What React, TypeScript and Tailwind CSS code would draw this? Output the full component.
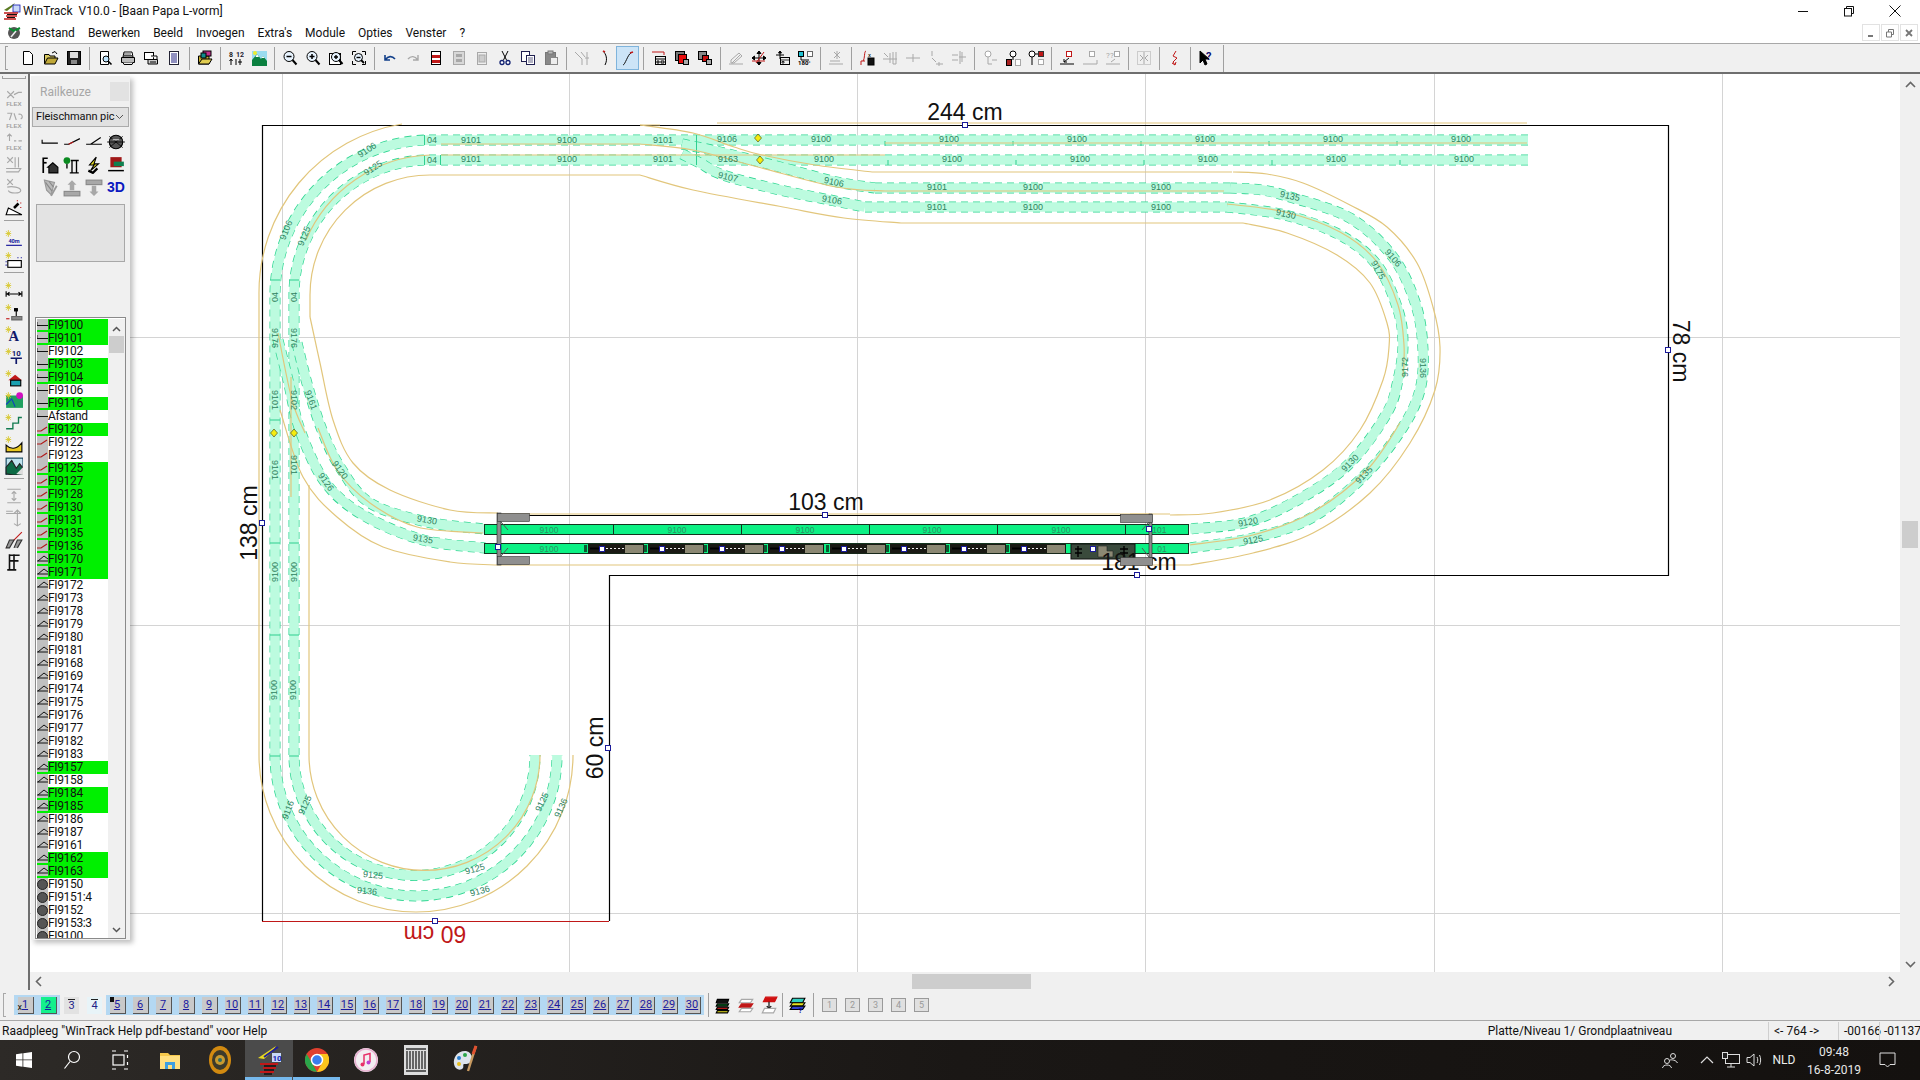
import type { ReactNode } from 'react';

// smooth line through the points, for the curved parts of the track plan
function spline(p: number[][]) {
  let d = `M${p[0][0]} ${p[0][1]}`;
  for (let i = 0; i < p.length - 1; i++) {
    const a = p[i - 1] || p[i];
    const b = p[i];
    const c = p[i + 1];
    const e = p[i + 2] || c;
    d += `C${b[0] + (c[0] - a[0]) / 6} ${b[1] + (c[1] - a[1]) / 6} ${c[0] - (e[0] - b[0]) / 6} ${c[1] - (e[1] - b[1]) / 6} ${c[0]} ${c[1]}`;
  }
  return d;
}

const tracks = [
  'M1528 140L430 140A155 155 0 0 0 275 295L275 755A141 141 0 0 0 557 755',
  'M1528 160L430 160A135 135 0 0 0 294 295L294 755A120.5 120.5 0 0 0 535 755',
  spline([[682, 144], [720, 152], [780, 167], [837, 182], [875, 188]]) + 'M875 188L1230 188' +
    spline([[1230, 188], [1262, 190], [1290, 197], [1350, 218], [1393, 257], [1416, 305], [1423, 350], [1420, 390], [1403, 427], [1367, 473], [1313, 517], [1253, 538], [1190, 548]]),
  spline([[682, 154], [700, 163], [723, 175], [780, 190], [830, 200], [865, 207]]) + 'M865 207L1227 207' +
    spline([[1227, 207], [1285, 215], [1340, 235], [1377, 265], [1398, 310], [1403, 345], [1398, 380], [1387, 413], [1350, 463], [1303, 497], [1248, 522], [1190, 529]]),
  spline([[297, 343], [308, 387], [322, 430], [340, 467], [370, 503], [427, 522], [485, 529]]),
  spline([[278, 340], [288, 380], [300, 430], [325, 482], [363, 515], [423, 540], [485, 548]]),
];

const ballast = [
  'M402 124A171 171 0 0 0 259 295L259 755A157 157 0 0 0 573 755',
  'M640 175L430 175A120 120 0 0 0 310 295L310 317',
  'M309 485L309 755A115.5 115.5 0 0 0 540 755',
  'M640 125L660 125M717 123L1527 123M885 143L1527 143M872 172L1232 172',
  'M441 144L640 144',
  spline([[640, 144], [693, 150], [758, 167], [836, 187], [885, 191]]) + 'M885 191L1224 191',
  'M441 155L885 155M430 155A140 140 0 0 0 306 240',
  spline([[640, 125], [693, 133], [734, 147], [762, 155], [815, 165], [872, 172]]),
  spline([[640, 175], [693, 190], [783, 207], [844, 218], [901, 223]]) + 'M901 223L1243 223',
  spline([[1233, 172], [1267, 174], [1303, 183], [1350, 205], [1387, 227], [1417, 263], [1433, 307], [1440, 347], [1435, 390], [1410, 443], [1370, 493], [1313, 533], [1253, 553], [1190, 565]]) + 'M1190 565L1130 565',
  spline([[1243, 223], [1287, 233], [1337, 255], [1370, 283], [1387, 323], [1389, 347], [1383, 380], [1360, 430], [1323, 470], [1270, 500], [1213, 513], [1170, 515]]) + 'M1170 514L1130 514',
  spline([[1227, 204], [1285, 212], [1340, 232], [1377, 262], [1398, 305], [1404, 345], [1403, 377]]),
  spline([[1400, 423], [1367, 470], [1313, 512], [1253, 535], [1190, 545]]),
  spline([[310, 317], [320, 363], [333, 420], [353, 463], [390, 490], [450, 510], [498, 513]]),
  spline([[280, 410], [303, 477], [337, 517], [383, 547], [450, 562], [498, 565]]),
  spline([[278, 333], [292, 400], [305, 433]]),
  'M291 377L291 497',
  spline([[318, 428], [337, 470], [370, 503], [417, 527], [483, 533]]),
  'M498 514L1150 514M498 565L1130 565',
];

const labels: [string, number, number, number][] = [
  ['04', 432, 140, 0], ['9101', 471, 140, 0], ['9100', 567, 140, 0], ['9101', 663, 140, 0], ['9106', 727, 139, 0],
  ['9100', 821, 139, 0], ['9100', 949, 139, 0], ['9100', 1077, 139, 0], ['9100', 1205, 139, 0], ['9100', 1333, 139, 0], ['9100', 1461, 139, 0],
  ['04', 432, 160, 0], ['9101', 471, 159, 0], ['9100', 567, 159, 0], ['9101', 663, 159, 0], ['9163', 728, 159, 0],
  ['9100', 824, 159, 0], ['9100', 952, 159, 0], ['9100', 1080, 159, 0], ['9100', 1208, 159, 0], ['9100', 1336, 159, 0], ['9100', 1464, 159, 0],
  ['9106', 834, 182, 12], ['9101', 937, 187, 0], ['9100', 1033, 187, 0], ['9100', 1161, 187, 0],
  ['9107', 728, 177, 14], ['9106', 832, 200, 10], ['9101', 937, 207, 0], ['9100', 1033, 207, 0], ['9100', 1161, 207, 0],
  ['9135', 1290, 196, 12], ['9130', 1286, 214, 12], ['9106', 1393, 258, 50], ['9175', 1378, 270, 62], ['9172', 1405, 367, -90], ['9136', 1423, 368, 90],
  ['9130', 1350, 463, -45], ['9135', 1364, 475, -45], ['9120', 1248, 522, -10], ['9125', 1253, 540, -10],
  ['9106', 367, 150, -33], ['9125', 373, 168, -33], ['9106', 286, 230, -68], ['9125', 304, 236, -68],
  ['04', 275, 297, -90], ['04', 294, 297, -90], ['9176', 275, 338, 90], ['9176', 294, 338, 90], ['9101', 275, 400, 90], ['9102', 294, 400, 90],
  ['9101', 275, 470, 90], ['9101', 294, 465, 90], ['9100', 275, 572, -90], ['9100', 294, 572, -90], ['9100', 274, 690, -90], ['9100', 293, 690, -90],
  ['9116', 288, 810, -70], ['9125', 305, 805, -65], ['9125', 373, 875, 5], ['9125', 475, 869, -15], ['9136', 367, 891, 5], ['9136', 480, 891, -15],
  ['9125', 542, 802, -65], ['9136', 561, 808, -65],
  ['9161', 311, 400, 70], ['9120', 340, 470, 55], ['9126', 326, 482, 55], ['9130', 427, 520, 10], ['9135', 423, 539, 10],
];

function Handle({ x, y }: { x: number; y: number }) {
  return <rect x={x - 2.5} y={y - 2.5} width="5" height="5" fill="#fff" stroke="#1a1a9a" strokeWidth="1" />;
}

function Plan() {
  const wagons = [588, 648, 708, 768, 830, 890, 950, 1010];
  return (
    <svg viewBox="30 74 1870 898" width="1870" height="898" className="block">
      {[282, 569, 857, 1145, 1434, 1722].map((x) => <line key={x} x1={x + 0.5} x2={x + 0.5} y1="74" y2="972" stroke="#d4d4d4" />)}
      {[337, 625, 913].map((y) => <line key={y} y1={y + 0.5} y2={y + 0.5} x1="30" x2="1900" stroke="#d4d4d4" />)}
      {tracks.map((d, i) => (
        <g key={i} fill="none">
          <path d={d} stroke="#2fd692" strokeWidth="11" strokeDasharray="7 5" />
          <path d={d} stroke="#bcfbdf" strokeWidth="9.6" />
        </g>
      ))}
      {[0, 1, 2, 3, 4].map((k) => (
        <g key={k} stroke="#2fcf8f">
          <line x1={885 + k * 128} x2={885 + k * 128} y1="141" y2="146" />
          <line x1={888 + k * 128} x2={888 + k * 128} y1="160" y2="165" />
        </g>
      ))}
      <path d="M696.5 135V165M424.5 135V145M424.5 155V165M440.5 155V165M270 280H280M289 280H299M270 420H280M270 543H280M289 543H299M270 635H280M289 635H299M270 756H280M289 756H299" stroke="#2fcf8f" fill="none" />
      <path d="M262.5 921V125.5H1668.5V575.5H609.5V921" fill="none" stroke="#000" strokeWidth="1.2" />
      <line x1="262" x2="609" y1="921.5" y2="921.5" stroke="#c01818" strokeWidth="1.2" />
      {ballast.map((d, i) => <path key={i} d={d} fill="none" stroke="#e2c67c" strokeWidth="1.2" />)}

      <g fontFamily="'Liberation Sans', sans-serif" fontSize="9" fill="#2f8260" textAnchor="middle" dominantBaseline="central">
        {labels.map(([t, x, y, a], i) => <text key={i} transform={`translate(${x} ${y}) rotate(${a})`}>{t}</text>)}
      </g>
      {[[758, 138], [760, 160], [274, 433], [294, 433]].map(([x, y]) => (
        <path key={x} d={`M${x} ${y - 4}L${x + 3.5} ${y}L${x} ${y + 4}L${x - 3.5} ${y}Z`} fill="#f4ec10" stroke="#3a3a10" strokeWidth="0.6" />
      ))}

      {/* station rows */}
      <g stroke="#14351f" strokeWidth="1">
        <rect x="484.5" y="524.5" width="704" height="10" fill="#0cf184" />
        <rect x="484.5" y="543.5" width="704" height="10" fill="#0cf184" />
      </g>
      {[613, 741, 869, 997, 1125].map((x) => <line key={x} x1={x + 0.5} x2={x + 0.5} y1="525" y2="534" stroke="#14351f" />)}
      <g fontFamily="'Liberation Sans', sans-serif" fontSize="8.5" fill="#2f8f63" textAnchor="middle" dominantBaseline="central">
        {[549, 677, 805, 932, 1061].map((x) => <text key={x} x={x} y="530">9100</text>)}
        <text x="1157" y="530">9101</text>
        <text x="549" y="549">9100</text>
      </g>

      {/* train */}
      {wagons.map((x) => (
        <g key={x}>
          <rect x={x} y="544" width="56" height="9.5" fill="#1a1a14" />
          <rect x={x + 37} y="545" width="18" height="8" fill="#8b8873" />
          <rect x={x - 4} y="545" width="3" height="7" fill="#0a5a30" />
          <line x1={x + 2} x2={x + 36} y1="548.5" y2="548.5" stroke="#f0f0f0" strokeDasharray="2 2" />
          <line x1={x + 2} x2={x + 15} y1="548.5" y2="548.5" stroke="#000" strokeWidth="2" />
          <Handle x={x + 14} y={549} />
        </g>
      ))}
      <rect x="1071" y="544" width="64" height="15" fill="#3a4a3c" stroke="#111" />
      <path d="M1078 546V557M1075 549H1082M1075 553H1082M1124 546V557M1120 549H1128M1120 553H1128" stroke="#000" strokeWidth="1.4" />
      <path d="M1098 546H1107V551H1113V557H1098Z" fill="#8b8873" stroke="#222" strokeWidth="0.6" />
      <Handle x={1093} y={549} />
      <text x="1162" y="549" fontFamily="'Liberation Sans', sans-serif" fontSize="8.5" fill="#2f8f63" textAnchor="middle" dominantBaseline="central">01</text>

      {/* dimension lines */}
      <line x1="498" x2="1150" y1="515.5" y2="515.5" stroke="#000" />
      <rect x="497" y="513" width="4" height="52" fill="#8d8d8d" stroke="#222" strokeWidth="0.6" />
      <rect x="1149" y="514" width="3" height="50" fill="#8d8d8d" stroke="#222" strokeWidth="0.6" />
      <path d="M501 522L508 530M501 556L508 548M1149 522L1142 530M1149 557L1142 548" stroke="#555" />
      <g fill="#8f8f8f" stroke="#333" strokeWidth="0.6">
        <rect x="497.5" y="513.5" width="32" height="8" />
        <rect x="497.5" y="556.5" width="32" height="8" />
        <rect x="1120.5" y="514.5" width="32" height="8" />
      </g>

      <g fontFamily="'Liberation Sans', sans-serif" fontSize="23" fill="#111" textAnchor="middle">
        <text x="965" y="120">244 cm</text>
        <text x="826" y="510">103 cm</text>
        <text x="1139" y="570">181 cm</text>
        <text transform="translate(1673 351) rotate(90)">78 cm</text>
        <text transform="translate(257 523) rotate(-90)">138 cm</text>
        <text transform="translate(603 748) rotate(-90)">60 cm</text>
        <text transform="translate(435 926) rotate(180)" fill="#c01818">60 cm</text>
      </g>
      <rect x="1120.5" y="557.5" width="32" height="8" fill="#8f8f8f" stroke="#333" strokeWidth="0.6" />

      <Handle x={965} y={125} />
      <Handle x={1668} y={350} />
      <Handle x={608} y={748} />
      <Handle x={435} y={921} />
      <Handle x={262} y={523} />
      <Handle x={1137} y={575} />
      <Handle x={825} y={515} />
      <Handle x={498} y={547} />
      <Handle x={1149} y={529} />
    </svg>
  );
}

const G = ({ children, size = 16 }: { children: ReactNode; size?: number }) => (
  <svg width={size} height={size} viewBox="0 0 16 16" fill="none" stroke="#000" strokeWidth="1">{children}</svg>
);

const gray = '#a8a8a8';

const icons: Record<string, ReactNode> = {
  new: <path d="M3.5 1.5H9.5L12.5 4.5V14.5H3.5Z" fill="#fff" />,
  open: <><path d="M1.5 14V4.5H6L7 6H12V8" fill="#d8c860" /><path d="M1.5 14L4.5 8H15L12 14Z" fill="#c0a838" /><path d="M9 3L12 1.5L14 4" /></>,
  save: <><rect x="1.5" y="1.5" width="13" height="13" fill="#222" /><rect x="4" y="2" width="8" height="6" fill="#ddd" stroke="none" /><rect x="5" y="10" width="6" height="4" fill="#888" stroke="none" /></>,
  preview: <><path d="M3.5 1.5H11.5V14.5H3.5Z" fill="#fff" /><circle cx="9" cy="9" r="3" fill="#bfe6ff" stroke="#000" /><path d="M11 11L14.5 14.5" strokeWidth="1.6" /></>,
  print: <><path d="M4 2H12L13 7H3Z" fill="#fff" /><path d="M1.5 7.5H14.5V12.5H1.5Z" fill="#bbb" /><path d="M3 12.5L4 14.5H12L13 12.5" fill="#eee" /><path d="M4 4H11M4 5.5H12" strokeWidth="0.7" /></>,
  setup: <><rect x="1.5" y="2.5" width="9" height="7" fill="#fff" /><path d="M5 9.5H14.5V14H5Z" fill="#ccc" /><path d="M8 6H14V9" fill="#fff" /><path d="M7 12H13" /></>,
  list: <><rect x="3.5" y="1.5" width="9" height="13" fill="#fff" stroke="#223" /><path d="M5 4H11M5 6H11M5 8H11M5 10H11M5 12H11" stroke="#202080" /></>,
  folder: <><path d="M1.5 14V6H12V14Z" fill="#c8b030" /><rect x="6" y="1" width="8" height="5" fill="#c0308c" stroke="#000" /><rect x="4" y="3" width="5" height="5" fill="#108c8c" stroke="#000" /><path d="M1.5 14L5 9H15L12 14Z" fill="#e0cc50" /></>,
  nums: <><text x="1" y="7" fontSize="7" fontWeight="700" fill="#222" stroke="none">8</text><text x="8" y="7" fontSize="7" fontWeight="700" fill="#223" stroke="none">12</text><path d="M3 9V15M1.5 11L3 9L4.5 11M8 9V15M12 9V15M10 12H14" strokeWidth="1" /></>,
  land: <><rect x="1" y="1" width="15" height="15" fill="#9adcf0" stroke="none" /><circle cx="4" cy="3" r="2" fill="#ecec30" stroke="none" /><path d="M1 16V10L6 4L10 9L12 6L16 11V16Z" fill="#0b8040" stroke="none" /><path d="M6 4L8 7H4.5ZM12 6L13.5 8H10.5Z" fill="#fff" stroke="none" /></>,
  zo: <><circle cx="7" cy="6.5" r="5" fill="#e8f4ff" /><path d="M4.5 6.5H9.5" strokeWidth="1.5" /><path d="M10.5 10L14.5 14.5" strokeWidth="2" /></>,
  zi: <><circle cx="7" cy="6.5" r="5" fill="#e8f4ff" /><path d="M4.5 6.5H9.5M7 4V9" strokeWidth="1.5" /><path d="M10.5 10L14.5 14.5" strokeWidth="2" /></>,
  zw: <><rect x="1.5" y="3.5" width="11" height="11" fill="#fff" /><circle cx="8" cy="7" r="4.5" fill="#e8f4ff" /><path d="M6 7H10M8 5V9" strokeWidth="1.4" /><path d="M11 10L14.5 14" strokeWidth="2" /></>,
  zf: <><path d="M1.5 5V1.5H5M11 1.5H14.5V5M14.5 11V14.5H11M5 14.5H1.5V11" /><circle cx="7.5" cy="7.5" r="4" fill="#e8f4ff" /><path d="M5.5 7.5H9.5" strokeWidth="1.4" /><path d="M10 10L13 13" strokeWidth="1.8" /></>,
  undo: <path d="M3 5V10H8M3.5 9.5C6 6 10 5.5 13 9" stroke="#13408a" strokeWidth="1.6" />,
  redo: <path d="M13 5V10H8M12.5 9.5C10 6 6 5.5 3 9" stroke={gray} strokeWidth="1.4" />,
  redpage: <><rect x="3.5" y="1.5" width="9" height="13" fill="#fff" /><rect x="4" y="5" width="8" height="3" fill="#c01818" stroke="none" /><rect x="4" y="10" width="8" height="3" fill="#c01818" stroke="none" /></>,
  graypage1: <><rect x="2.5" y="1.5" width="11" height="13" fill="#d8d8d8" stroke={gray} /><rect x="5" y="4" width="6" height="3" fill={gray} stroke="none" /><rect x="5" y="9" width="6" height="3" fill={gray} stroke="none" /></>,
  graypage2: <><rect x="3.5" y="2.5" width="9" height="12" fill="#eee" stroke={gray} /><rect x="5" y="5" width="6" height="7" fill="#ccc" stroke={gray} /></>,
  cut: <><path d="M5 1L9.5 10M11 1L6.5 10" /><circle cx="5" cy="12.5" r="2" fill="#fff" stroke="#102070" strokeWidth="1.3" /><circle cx="11" cy="12.5" r="2" fill="#fff" stroke="#102070" strokeWidth="1.3" /></>,
  copy: <><rect x="1.5" y="1.5" width="8" height="10" fill="#fff" stroke="#202050" /><rect x="6.5" y="5.5" width="8" height="9" fill="#fff" stroke="#202050" /><path d="M8 8H13M8 10H13M8 12H13" stroke="#202050" strokeWidth="0.7" /></>,
  paste: <><rect x="2.5" y="2.5" width="10" height="12" fill="#888" stroke="#777" /><rect x="5" y="1" width="5" height="3" fill="#bbb" stroke="#777" /><rect x="7.5" y="7.5" width="7" height="7" fill="#eee" stroke="#888" /></>,
  swg: <path d="M1 2L8 9V15M7 2L11 7M13 2V15M11 8H15" stroke={gray} />,
  sw: <><path d="M6 1C9 4 11 9 8 15" /><path d="M6 1L8 2" stroke="#c01818" strokeWidth="1.6" /></>,
  flex: <><path d="M3 15C5 15 8 4 11 3" stroke="#111" /><path d="M10 3L13 2" stroke="#c01818" strokeWidth="1.6" /></>,
  tbl: <><path d="M1 2H13V5" stroke="#c01818" /><rect x="4.5" y="6.5" width="10" height="8" fill="#eee" /><path d="M4.5 9H14.5M6 11H8V13H6ZM10 11H13V13H10Z" /></>,
  sq1: <><rect x="1.5" y="1.5" width="9" height="9" fill="#777" /><rect x="4.5" y="4.5" width="8" height="9" fill="#e80c0c" /><rect x="9.5" y="9.5" width="5" height="5" fill="#aaa" /></>,
  sq2: <><rect x="1.5" y="1.5" width="8" height="8" fill="#888" /><rect x="5.5" y="5.5" width="6" height="6" fill="#c81010" /><rect x="9.5" y="9.5" width="5" height="5" fill="#aaa" /></>,
  g1: <path d="M1 14H15M4 13L13 4M11 3L14 6L6 13H3V10Z" stroke={gray} />,
  move: <><path d="M8 1V15M1 8H15M8 1L6 3.5H10ZM8 15L6 12.5H10ZM1 8L3.5 6V10ZM15 8L12.5 6V10Z" fill="#000" /><path d="M1 11H14M13 2L5 13" stroke="#c01818" /></>,
  movet: <><path d="M6 1V9M2 5H10M6 1L4.5 3H7.5Z" fill="#000" /><rect x="6.5" y="7.5" width="9" height="7" fill="#eee" /><path d="M6.5 10H15.5M8 11.5H10V13H8Z" strokeWidth="0.8" /></>,
  rot: <><rect x="1.5" y="1.5" width="5" height="5" fill="#20c0d0" /><rect x="10.5" y="1.5" width="5" height="5" fill="#fff" stroke="#666" /><path d="M4 7V10H12" /><text x="1" y="15" fontSize="6" fontWeight="700" fill="#000" stroke="none">180°</text></>,
  g2: <><path d="M1 14H15M2 11H12M6 2L12 8M12 2L6 8M9 1V9" stroke={gray} /></>,
  fx: <><path d="M2 15V11H6M7 1C5 1 6 9 4 11" stroke="#c01818" /><rect x="9" y="8" width="6" height="7" fill="#111" /><text x="9" y="7" fontSize="6" fill="#000" stroke="none">x</text></>,
  g3: <path d="M1 9H15M8 3V13M2 3L6 7M11 2V14H14V2" stroke={gray} />,
  g4: <path d="M1 8H15M8 4V12" stroke={gray} />,
  g5: <path d="M4 1V6M4 8L8 12M8 14H15M11 12V16" stroke={gray} />,
  g6: <path d="M1 5H7M1 10H7M8 7H15M11 2V12M9 1V14" stroke={gray} />,
  c1: <><circle cx="6" cy="4" r="3" fill="#fff" stroke={gray} /><path d="M6 7V14H10M10 10H15" stroke={gray} /></>,
  c2: <><circle cx="8" cy="4" r="3" fill="#fff" /><path d="M8 7V10" /><rect x="1.5" y="9.5" width="5" height="6" fill="#a82020" /><rect x="10.5" y="9.5" width="5" height="6" fill="#fff" stroke={gray} /></>,
  c3: <><circle cx="4" cy="4" r="3" fill="#fff" /><path d="M4 7V15M7 4H10" /><rect x="10.5" y="1.5" width="5" height="5" fill="#c01818" stroke="#333" /><rect x="10.5" y="9.5" width="5" height="5" fill="#fff" stroke={gray} /></>,
  d1: <><rect x="7.5" y="1.5" width="5" height="5" fill="#fff" stroke="#c01818" /><path d="M1 14H15M10 8L5 12M5 9V12H8" /></>,
  d2: <><rect x="7.5" y="1.5" width="5" height="5" fill="#fff" stroke={gray} /><path d="M1 14H15V10" stroke={gray} /></>,
  d3: <><rect x="9.5" y="1.5" width="5" height="5" fill="#fff" stroke={gray} /><text x="1" y="8" fontSize="8" fill={gray} stroke="none">?</text><text x="5" y="8" fontSize="8" fill={gray} stroke="none">?</text><path d="M1 14H15M10 9L6 12" stroke={gray} /></>,
  g7: <><rect x="1.5" y="1.5" width="13" height="13" stroke={gray} strokeDasharray="1 1" /><path d="M8 2V14M4 5L7 8L4 11M12 5L9 8L12 11" stroke={gray} /></>,
  bolt: <path d="M9 1L6 6L10 8L6 12L8 15M5 13L8 15L9 12" stroke="#c01818" />,
  help: <><path d="M2 1V13L5 10L7 15L9 14L7 9H11Z" fill="#000" /><text x="8" y="10" fontSize="11" fontWeight="700" fill="#101070" stroke="none">?</text></>,
};

const topBar = [
  'new', 'open', 'save', '|', 'preview', 'print', 'setup', 'list', '|', 'folder', '|', 'nums', 'land', '|', 'zo', 'zi', 'zw', 'zf', '|',
  'undo', 'redo', 'redpage', 'graypage1', 'graypage2', 'cut', 'copy', 'paste', '|', 'swg', 'sw', 'flex', '|',
  'tbl', 'sq1', 'sq2', '|', 'g1', 'move', 'movet', 'rot', '|', 'g2', '|', 'fx', 'g3', 'g4', 'g5', 'g6', '|', 'c1', 'c2', 'c3', '|', 'd1', 'd2', 'd3', '|', 'g7', '|', 'bolt', '|', 'help',
];

function TopBar() {
  return (
    <div className="h-[31px] bg-[#f0f0f0] border-t border-t-[#a8a8a8] border-b-2 border-b-[#6e6e6e] flex items-center pl-[5px]">
      <div className="w-[3px] h-[24px] border-l border-y border-[#a0a0a0] mr-[8px]" />
      {topBar.map((n, i) =>
        n === '|' ? (
          <div key={i} className="w-[8px] flex justify-center"><div className="w-px h-[23px] bg-[#a0a0a0]" /></div>
        ) : n === 'flex' ? (
          <div key={i} className="w-[23px] h-[24px] flex items-center justify-center bg-[#cce4f7] border border-[#7fb4dc]"><G>{icons[n]}</G></div>
        ) : (
          <div key={i} className="w-[23px] flex justify-center"><G>{icons[n]}</G></div>
        ),
      )}
      <div className="w-px h-[27px] bg-[#a0a0a0] ml-[6px]" />
    </div>
  );
}

const Spark = () => <path d="M3 1V7M0.5 4H5.5M1 2L5 6M5 2L1 6" stroke="#d8c830" strokeWidth="0.8" />;

const FlexIcon = ({ top }: { top: ReactNode }) => (
  <G size={18}>
    {top}
    <text x="1" y="15" fontSize="5.4" fontWeight="700" fill="#a0a0a0" stroke="none" fontFamily="Liberation Sans, sans-serif">FLEX</text>
  </G>
);

const sideIcons: ReactNode[] = [
  <FlexIcon top={<path d="M2 2L8 8M8 2L2 8M8 5L12 3H15" stroke={gray} />} />,
  <FlexIcon top={<path d="M2 2H6L4 8M8 2L10 8M12 3A2 2 0 0 1 14 7" stroke={gray} />} />,
  <FlexIcon top={<path d="M4 1V7M2 3L4 1L6 3M8 7H10M12 7H15" stroke={gray} />} />,
  <G size={18}><path d="M2 2L7 7M7 2L2 7M9 2V11M12 2V11M1 12H14L12 15H1" stroke={gray} /></G>,
  <G size={18}><path d="M2 2L7 7M7 2L2 7M2 9C6 8 14 9 14 12C14 15 4 15 3 12" stroke={gray} /></G>,
  <G size={18}><path d="M1 14H15L3 8Z" fill="#fff" /><path d="M8 8L12 4" strokeWidth="2.2" /><path d="M11 1V2M14 3V4M14 7V8" stroke="#c01818" /></G>,
  null,
  <G size={18}><Spark /><text x="3" y="12" fontSize="5" fontWeight="700" fill="#10109a" stroke="none">40m</text><path d="M1 14.5H15" stroke="#10109a" /></G>,
  <G size={18}><Spark /><rect x="2.5" y="8.5" width="12" height="6" fill="#fff" /><path d="M11 6H12M14 6H15M1 9V10M1 12V13" stroke="#10109a" /></G>,
  null,
  <G size={18}><Spark /><path d="M1 9V14M15 9V14M1 11.5H15M4 10L2 11.5L4 13M12 10L14 11.5L12 13" /></G>,
  <G size={18}><Spark /><path d="M10 6V12" /><path d="M1 14H4" stroke="#c01818" /><path d="M6 15V12H15V15Z" fill="#888" stroke="#666" /><rect x="8.5" y="5" width="2.5" height="2" fill="#000" /></G>,
  <G size={18}><Spark /><text x="3" y="14" fontSize="13" fontWeight="700" fill="#10186a" stroke="none" fontFamily="Liberation Serif, serif">A</text></G>,
  <G size={18}><Spark /><text x="6" y="8" fontSize="7" fontWeight="700" fill="#10186a" stroke="none">10</text><path d="M5 10H15M10 10V15" stroke="#10186a" strokeWidth="1.5" /></G>,
  <G size={18}><Spark /><path d="M3 10L9 5L15 10Z" fill="#c01818" stroke="none" /><rect x="5" y="10" width="9" height="5" fill="#18a0b0" /></G>,
  <G size={18}><rect x="1" y="4" width="15" height="11" fill="#20a060" stroke="none" /><Spark /><circle cx="13" cy="4" r="3" fill="#d010c0" stroke="none" /><path d="M1 12L6 7L9 14" stroke="#1040c0" /></G>,
  <G size={18}><Spark /><path d="M1 14H7V9H12V4H15" stroke="#127a50" strokeWidth="1.2" /></G>,
  <G size={18}><Spark /><path d="M1 9C5 13 10 13 15 7V15H1Z" fill="#e8c820" stroke="#000" /></G>,
  <G size={18}><rect x="1" y="1" width="15" height="15" fill="#bfe4ee" stroke="#10405a" /><path d="M1 15V9L6 3L10 10L13 6L16 10V16H8Z" fill="#0c6a44" stroke="#222" /><path d="M10 15L16 9V16Z" fill="#ddd" stroke="none" /></G>,
  null,
  <G size={18}><path d="M2 2H14M2 14H14M8 4V12M6 6L8 4L10 6M6 10L8 12L10 10" stroke={gray} /></G>,
  <G size={18}><path d="M1 2H7M11 1V15M8 13L11 15L14 13M8 4L11 1L14 4M1 4H14" stroke={gray} /></G>,
  <G size={18}><path d="M1 15L15 1" stroke="#c01818" /><path d="M1 15L4 8H8L4 15ZM8 15L11 8H15L11 15" fill="#9a9a9a" stroke="#333" /></G>,
  <G size={18}><path d="M4 1V15M8 1V15M2 15H10M4 2H13M4 7H12" strokeWidth="1.4" stroke="#111" /></G>,
];

function SideBar() {
  return (
    <div className="w-[30px] bg-[#f0f0f0] border-r-2 border-r-[#6e6e6e] flex flex-col items-center pt-[2px] pl-[2px] pr-[2px] shrink-0">
      <div className="w-[24px] h-[3px] border-x border-b border-[#a0a0a0] mb-[8px]" />
      {sideIcons.map((n, i) =>
        n === null ? (
          <div key={i} className="w-[20px] h-[5px] border-b border-[#a0a0a0] mb-[6px] -mt-[3px]" />
        ) : (
          <div key={i} className="h-[22px] flex items-center justify-center">{n}</div>
        ),
      )}
    </div>
  );
}

const panelIcons: ReactNode[] = [
  <G size={18}><path d="M1 6V9H15" /></G>,
  <G size={18}><path d="M1 10H5L15 5" /><path d="M5 10L9 8" stroke="#c01818" /></G>,
  <G size={18}><path d="M1 10H15M5 10L14 4" /></G>,
  <G size={18}><circle cx="8" cy="8" r="6" fill="#555" /><path d="M0 8H16M2 3L14 13M14 3L2 13" strokeWidth="0.7" /><path d="M5 6H11" stroke="#ccc" /></G>,
  <G size={18}><path d="M2 15V2H6" strokeWidth="1.5" /><path d="M2 6H5" strokeWidth="1.5" /><path d="M6 10L10.5 6L15 10V15H7V10Z" fill="#333" /></G>,
  <G size={18}><circle cx="3.5" cy="4" r="3" fill="#0a8a20" stroke="none" /><path d="M3.5 7V11M7 4H14M8 4V15M12 4V15M6 15H14" strokeWidth="1.2" /></G>,
  <G size={18}><path d="M10 1L4 8H8L5 13L12 7H8Z" fill="#e8e020" /><path d="M3 13L7 15L11 11" strokeWidth="2" /></G>,
  <G size={18}><rect x="3" y="1" width="10" height="9" fill="#a01818" stroke="none" /><rect x="6" y="5" width="9" height="4" fill="#108050" stroke="none" /><path d="M1 13H15" strokeWidth="1.3" /></G>,
  <G size={18}><path d="M3 1L12 3L9 14L5 10Z" fill="#bbb" stroke="#999" /><path d="M4 3L10 11M7 2L11 7" stroke="#888" /><path d="M14 6L9 15" stroke="#999" strokeWidth="1.6" /></G>,
  <G size={18}><path d="M8 1L12 5H10V10H6V5H4Z" fill="#a8a8a8" stroke="none" /><rect x="1" y="11" width="14" height="4" fill="#a8a8a8" stroke="#888" /></G>,
  <G size={18}><rect x="1" y="1" width="14" height="4" fill="#a8a8a8" stroke="#888" /><path d="M8 15L12 11H10V6H6V11H4Z" fill="#a8a8a8" stroke="none" /></G>,
  <span className="text-[14px] font-bold text-[#0a18c0] [font-family:'Liberation_Sans',sans-serif]">3D</span>,
];

type Kind = 's' | 'c' | 'k' | 't';
const parts: [string, boolean, Kind][] = [
  ['FI9100', true, 's'], ['FI9101', true, 's'], ['FI9102', false, 's'], ['FI9103', true, 's'], ['FI9104', true, 's'], ['FI9106', false, 's'],
  ['FI9116', true, 's'], ['Afstand', false, 's'], ['FI9120', true, 'c'], ['FI9122', false, 'c'], ['FI9123', false, 'c'], ['FI9125', true, 'c'],
  ['FI9127', true, 'c'], ['FI9128', true, 'c'], ['FI9130', true, 'c'], ['FI9131', true, 'c'], ['FI9135', true, 'c'], ['FI9136', true, 'c'],
  ['FI9170', true, 'k'], ['FI9171', true, 'k'], ['FI9172', false, 'k'], ['FI9173', false, 'k'], ['FI9178', false, 'k'], ['FI9179', false, 'k'],
  ['FI9180', false, 'k'], ['FI9181', false, 'k'], ['FI9168', false, 'k'], ['FI9169', false, 'k'], ['FI9174', false, 'k'], ['FI9175', false, 'k'],
  ['FI9176', false, 'k'], ['FI9177', false, 'k'], ['FI9182', false, 'k'], ['FI9183', false, 'k'], ['FI9157', true, 'k'], ['FI9158', false, 'k'],
  ['FI9184', true, 'k'], ['FI9185', true, 'k'], ['FI9186', false, 'k'], ['FI9187', false, 'k'], ['FI9161', false, 'k'], ['FI9162', true, 'k'],
  ['FI9163', true, 'k'], ['FI9150', false, 't'], ['FI9151:4', false, 't'], ['FI9152', false, 't'], ['FI9153:3', false, 't'], ['FI9100', false, 't'],
];

function PartIcon({ kind, on }: { kind: Kind; on: boolean }) {
  return (
    <svg width="11" height="13" viewBox="0 0 11 13" className="shrink-0" fill="none">
      <rect width="11" height="13" fill="#c0c0c0" />
      {on && <rect y="11" width="11" height="2" fill="#00f000" />}
      {kind === 's' && <path d="M0 3V6.5H11" stroke="#111" />}
      {kind === 'c' && <path d="M0 8L4 8L10 4" stroke="#b01818" strokeWidth="1.2" />}
      {kind === 'k' && <path d="M0 8H11M1 8L7 3L11 6" stroke="#111" />}
      {kind === 't' && <circle cx="5.5" cy="6.5" r="5" fill="#555" stroke="#222" />}
    </svg>
  );
}

function Railkeuze() {
  return (
    <div className="absolute left-[1px] top-[2px] w-[99px] h-[864px] bg-[#f0f0f0] shadow-[3px_3px_5px_rgba(0,0,0,0.25)] flex flex-col">
      <div className="h-[31px] flex items-start justify-between pr-[1px] pt-[6px] pl-[9px]">
        <span className="text-[12px] text-[#a6a6a6] mt-[1px]">Railkeuze</span>
        <div className="w-[19px] h-[19px] bg-[#e2e2e2]" />
      </div>
      <div className="mx-[1px] h-[20px] bg-[#e1e1e1] border border-[#ababab] flex items-center pl-[3px] pr-[4px] text-[11px] tracking-[-0.1px] text-[#111]">
        <span className="whitespace-nowrap">Fleischmann pic</span>
        <svg width="9" height="6" viewBox="0 0 9 6" fill="none" className="ml-auto shrink-0"><path d="M1 1L4.5 4.5L8 1" stroke="#555" /></svg>
      </div>
      <div className="grid grid-cols-4 w-[88px] ml-[8px] mt-[3px]">
        {panelIcons.map((n, i) => <div key={i} className="h-[23px] flex items-center justify-center">{n}</div>)}
      </div>
      <div className="mx-[5px] mt-[5px] h-[58px] bg-[#e3e3e3] border border-[#a8a8a8]" />
      <div className="relative mx-[4px] mt-[55px] h-[622px] bg-white border border-[#8a8a8a] overflow-hidden pt-[1px] pl-[1px] flex">
        <div className="w-[72px] flex flex-col">
          {parts.map(([n, on, kind], i) => (
            <div key={i} className={`h-[13px] shrink-0 flex items-center text-[12px] leading-[13px] tracking-[-0.35px] text-[#111] ${on ? 'bg-[#00f000]' : 'bg-white'}`}>
              <PartIcon kind={kind} on={on} />
              <span>{n}</span>
            </div>
          ))}
        </div>
        <div className="w-[17px] bg-[#f0f0f0] flex flex-col items-center pt-[7px] pb-[5px]">
          <svg width="9" height="6" viewBox="0 0 9 6" fill="none"><path d="M1 5L4.5 1.5L8 5" stroke="#555" strokeWidth="1.5" /></svg>
          <div className="w-[15px] h-[17px] bg-[#cdcdcd] mt-[4px]" />
          <svg width="9" height="6" viewBox="0 0 9 6" fill="none" className="mt-auto"><path d="M1 1L4.5 4.5L8 1" stroke="#555" strokeWidth="1.5" /></svg>
        </div>
      </div>
    </div>
  );
}

const layerIcons: ReactNode[] = [
  <G size={18}><path d="M3 3H13L12 6H2Z" fill="#111" /><path d="M3 7H13L12 9H2Z" fill="#0a7a2a" /><path d="M3 10H13L12 12H2Z" fill="#b01818" /><path d="M3 13H13L12 15H2Z" fill="#e8e020" /></G>,
  <G size={18}><path d="M4 3H14L12 6H2Z" fill="#fff" stroke={gray} /><path d="M4 7H14L12 10H2Z" fill="#c01818" stroke="#c01818" /><path d="M4 11H14L12 14H2Z" fill="#fff" stroke={gray} /></G>,
  <G size={18}><path d="M5 1H15L13 5H3Z" fill="#d01010" stroke="#d01010" /><path d="M8 5V11M6 9L8 11L10 9" /><path d="M4 11H14L12 15H2Z" fill="#fff" stroke={gray} /></G>,
];

function PageTab({ n }: { n: number }) {
  if (n === 3 || n === 4) {
    return (
      <div className="w-[23px] h-[20px] flex items-center justify-center">
        <div className={`w-[15px] h-[17px] flex items-center justify-center text-[11px] text-[#222288] ${n === 3 ? 'bg-[#e2e2e2]' : 'bg-[#e8f4f8]'}`}>
          <span className="border-t border-[#222] leading-none">{n}</span>
        </div>
      </div>
    );
  }
  return (
    <div className="w-[23px] h-[20px] bg-[#b4d8f2] flex items-center justify-center">
      <div className={`relative w-[16px] h-[17px] flex items-center justify-center text-[11px] leading-none text-[#1a1aa0] border-r border-b border-[#555] ${n === 2 ? 'bg-[#14f08c]' : 'bg-[#c9c9c9]'}`}>
        <span className="underline">{n}</span>
        {n === 1 && <span className="absolute left-0 bottom-[1px] text-[9px] text-[#111]">x</span>}
        {n === 5 && <span className="absolute left-0 top-0 w-[4px] h-[5px] bg-[#111]" />}
      </div>
    </div>
  );
}

function BottomBar() {
  const pages = Array.from({ length: 30 }, (_, i) => i + 1);
  return (
    <div className="h-[31px] bg-[#f0f0f0] border-b border-b-[#a8a8a8] flex items-center pl-[3px]">
      <div className="w-[3px] h-[24px] border-l border-y border-[#a8a8a8] mr-[8px]" />
      {pages.map((n) => <PageTab key={n} n={n} />)}
      <div className="w-[6px] ml-[1px] flex justify-center"><div className="w-px h-[24px] bg-[#a0a0a0]" /></div>
      {layerIcons.map((n, i) => <div key={i} className="w-[23px] flex justify-center">{n}</div>)}
      <div className="w-[5px] flex justify-center"><div className="w-px h-[24px] bg-[#a0a0a0]" /></div>
      <div className="w-[23px] flex justify-center">
        <G size={18}><path d="M4 2H15L13 6H2Z" fill="#30d0c0" /><path d="M4 6H15L13 9H2Z" fill="#e8e020" /><path d="M4 9H15L13 12H2Z" fill="#3040d0" /><text x="9" y="15" fontSize="7" fontWeight="700" fill="#10109a" stroke="none">?</text></G>
      </div>
      <div className="w-[10px] flex justify-center"><div className="w-px h-[24px] bg-[#a0a0a0]" /></div>
      {[1, 2, 3, 4, 5].map((n) => (
        <div key={n} className="w-[23px] flex justify-center">
          <div className="w-[15px] h-[14px] bg-[#e0e0e0] border border-[#9a9a9a] flex items-center justify-center text-[9px] leading-none text-[#9a9a9a]">{n}</div>
        </div>
      ))}
    </div>
  );
}

function TaskIcon({ w, active, under, children }: { w: number; active?: boolean; under?: boolean; children: ReactNode }) {
  return (
    <div style={{ width: w }} className={`h-[40px] relative flex items-center justify-center ${active ? 'bg-[#4b4b4b]' : ''}`}>
      {children}
      {under && <div className="absolute left-[0px] right-[1px] bottom-0 h-[3px] bg-[#76b9ed]" />}
    </div>
  );
}

function Taskbar() {
  return (
    <div className="h-[40px] bg-[linear-gradient(90deg,#2d2a27,#1a1715_50%,#14110f)] flex items-center text-white">
      <TaskIcon w={48}>
        <svg width="16" height="16" viewBox="0 0 16 16" fill="#fff"><path d="M0 2.2L6.5 1.3V7.5H0ZM7.3 1.2L16 0V7.5H7.3ZM0 8.3H6.5V14.7L0 13.8ZM7.3 8.3H16V16L7.3 14.8Z" /></svg>
      </TaskIcon>
      <TaskIcon w={48}>
        <svg width="18" height="20" viewBox="0 0 18 20" fill="none" stroke="#fff" strokeWidth="1.2"><circle cx="11" cy="7" r="5.5" /><path d="M7 11.5L1.5 18.5" /></svg>
      </TaskIcon>
      <TaskIcon w={48}>
        <svg width="18" height="20" viewBox="0 0 18 20" fill="none" stroke="#fff" strokeWidth="1.2"><path d="M1 1H5M13 1H17M1 19H5M13 19H17" /><rect x="2" y="5" width="11" height="10" /><path d="M16.5 5V8M16.5 12V15" /></svg>
      </TaskIcon>
      <TaskIcon w={51}>
        <svg width="22" height="22" viewBox="0 0 22 22"><path d="M1 4H9L11 6H21V20H1Z" fill="#f5c84c" /><rect x="1" y="7" width="20" height="13" fill="#ffdf80" /><rect x="6" y="13" width="10" height="7" fill="#3d9ee0" /><rect x="9" y="16" width="4" height="4" fill="#ffdf80" /></svg>
      </TaskIcon>
      <TaskIcon w={50}>
        <svg width="24" height="30" viewBox="0 0 24 30"><ellipse cx="12" cy="15" rx="11" ry="14" fill="#d28a10" /><ellipse cx="12" cy="15" rx="8" ry="10" fill="#3d3a2a" /><circle cx="12" cy="15" r="5" fill="#c89a30" /><circle cx="12" cy="15" r="2" fill="#2a6a6a" /></svg>
      </TaskIcon>
      <TaskIcon w={48} active under>
        <svg width="26" height="32" viewBox="0 0 26 32"><path d="M2 14L20 2L16 8L8 15Z" fill="#e8d820" /><path d="M8 13L22 3" stroke="#20209a" strokeWidth="2" /><rect x="16" y="9" width="9" height="9" fill="#c8d8f8" /><text x="16.5" y="17" fontSize="8" fontWeight="700" fill="#1018b0">10</text><path d="M4 20H22M7 24H20M4 28H18" stroke="#c01818" strokeWidth="2" /><path d="M8 22H20M8 26H18M8 30H16" stroke="#111" strokeWidth="1.4" /></svg>
      </TaskIcon>
      <TaskIcon w={48} under>
        <svg width="24" height="24" viewBox="0 0 24 24"><circle cx="12" cy="12" r="12" fill="#e0402f" /><path d="M12 24A12 12 0 0 1 1.6 6L7 15L12 24Z" fill="#2aa64a" /><path d="M12 6H22.5A12 12 0 0 1 12 24L17 15Z" fill="#fbc51c" /><circle cx="12" cy="12" r="5.5" fill="#3b7ded" stroke="#fff" strokeWidth="1.5" /></svg>
      </TaskIcon>
      <TaskIcon w={50}>
        <svg width="24" height="24" viewBox="0 0 24 24"><circle cx="12" cy="12" r="12" fill="#f3eef2" /><circle cx="12" cy="12" r="11" fill="none" stroke="#e8b0d0" strokeWidth="1.5" /><path d="M10 16V7L16 5.5V14" fill="none" stroke="#e8306a" strokeWidth="1.5" /><circle cx="8.5" cy="16.5" r="2" fill="#e8306a" /><circle cx="14.5" cy="14.5" r="2" fill="#c040d0" /></svg>
      </TaskIcon>
      <TaskIcon w={50}>
        <svg width="24" height="30" viewBox="0 0 24 30"><rect width="24" height="30" fill="#ddd" /><path d="M2 4H22M2 26H22" stroke="#333" strokeWidth="1.6" /><path d="M3 6V24M6 6V24M9 6V24M12 6V24M15 6V24M18 6V24M21 6V24" stroke="#333" strokeWidth="1.4" /></svg>
      </TaskIcon>
      <TaskIcon w={50}>
        <svg width="26" height="30" viewBox="0 0 26 30"><path d="M12 6C4 6 0 13 1 19C2 25 8 26 10 23C11 21 9 19 12 19C17 19 20 17 19 12C18 8 15 6 12 6Z" fill="#dde4ec" /><circle cx="6" cy="13" r="2" fill="#2a7fd0" /><circle cx="12" cy="10" r="2" fill="#2aa64a" /><circle cx="6" cy="19" r="2" fill="#e8c020" /><path d="M23 1L15 26" stroke="#c89a60" strokeWidth="2.4" /><path d="M23 1L20 9" stroke="#e0502f" strokeWidth="3" /></svg>
      </TaskIcon>
      <div className="ml-auto flex items-center h-full">
        <svg width="18" height="18" viewBox="0 0 18 18" fill="none" stroke="#ddd" className="mr-[21px]"><circle cx="6" cy="10" r="2.5" /><path d="M1.5 17C2 13 10 13 10.5 17" /><circle cx="12" cy="5" r="2.5" /><path d="M9 9C11 8.5 15 9 16.5 12" /></svg>
        <svg width="14" height="8" viewBox="0 0 14 8" fill="none" stroke="#ddd" strokeWidth="1.2" className="mr-[8px]"><path d="M1 7L7 1L13 7" /></svg>
        <svg width="18" height="18" viewBox="0 0 18 18" fill="none" stroke="#ddd" className="mr-[6px]"><rect x="3.5" y="3.5" width="14" height="9" /><rect x="0.5" y="1.5" width="5" height="6" fill="#222" /><path d="M9 12.5V16M5 16H13" /></svg>
        <svg width="18" height="16" viewBox="0 0 18 16" fill="none" stroke="#ddd" className="mr-[5px]"><path d="M1 5.5H4L8 2V14L4 10.5H1Z" /><path d="M11 5C12 7 12 9 11 11M13.5 3C15 6 15 10 13.5 13" /></svg>
        <span className="text-[12px] text-[#eee] w-[30px] text-center mr-[7px]">NLD</span>
        <div className="text-[12px] leading-[18px] text-[#e8e8e8] text-center w-[56px] mr-[17px] mt-[1px]">
          <div>09:48</div>
          <div>16-8-2019</div>
        </div>
        <svg width="17" height="16" viewBox="0 0 17 16" fill="none" stroke="#ddd" className="mr-[24px]"><path d="M1 1H16V12.5H11L8.5 15L6 12.5H1Z" /></svg>
      </div>
    </div>
  );
}

export default function App() {
  return (
    <div className="w-[1920px] h-[1080px] overflow-hidden bg-white flex flex-col [font-family:Roboto,sans-serif] text-[12px] text-[#111]">
      {/* title bar */}
      <div className="h-[22px] bg-white flex items-center pl-[3px] shrink-0">
        <svg width="18" height="18" viewBox="0 0 18 18"><path d="M1 8L12 1L9 5L4 9Z" fill="#5a7a20" /><rect x="10" y="3" width="7" height="7" fill="#c8d8f8" stroke="#1018b0" strokeWidth="0.8" /><path d="M1 11H15M3 14H14M1 17H13" stroke="#c01818" strokeWidth="1.6" /><path d="M4 12.5H14M4 15.5H12" stroke="#111" strokeWidth="1" /></svg>
        <span className="ml-[2px] text-[12px]">WinTrack&nbsp; V10.0 - [Baan Papa L-vorm]</span>
        <div className="ml-auto flex items-center">
          <svg width="12" height="12" viewBox="0 0 12 12" className="mr-[34px]"><path d="M1 6.5H11" stroke="#111" /></svg>
          <svg width="12" height="12" viewBox="0 0 12 12" fill="none" stroke="#111" className="mr-[34px]"><rect x="1.5" y="3.5" width="7" height="7.5" /><path d="M3.5 3.5V1.5H10.5V8.5H8.5" /></svg>
          <svg width="12" height="12" viewBox="0 0 12 12" fill="none" stroke="#111" className="mr-[19px]"><path d="M0.5 0.5L11.5 11.5M11.5 0.5L0.5 11.5" /></svg>
        </div>
      </div>

      {/* menu bar */}
      <div className="h-[21px] bg-white flex items-center pl-[7px] shrink-0">
        <svg width="16" height="16" viewBox="0 0 16 16"><circle cx="7" cy="8" r="6" fill="#555" /><path d="M2 3L7 6L13 3" stroke="#0a8a30" strokeWidth="2" fill="none" /><path d="M4 12L9 6" stroke="#eee" strokeWidth="1.5" /></svg>
        <div className="ml-[8px] flex gap-[13px] text-[12px]">
          {['Bestand', 'Bewerken', 'Beeld', 'Invoegen', "Extra's", 'Module', 'Opties', 'Venster', '?'].map((m) => <span key={m}>{m}</span>)}
        </div>
        <div className="ml-auto flex gap-[1px] mr-[2px] self-start mt-[2px]">
          {['min', 'max', 'x'].map((k) => (
            <div key={k} className="w-[18px] h-[17px] border border-[#e2e2e2] flex items-center justify-center">
              <svg width="10" height="10" viewBox="0 0 10 10" fill="none" stroke="#777" strokeWidth="1.4">
                {k === 'min' && <path d="M2 8H7" strokeWidth="2" />}
                {k === 'max' && <path d="M1.5 4H6.5V9H1.5ZM3.5 4V1.5H8.5V6.5H6.5" strokeWidth="1" />}
                {k === 'x' && <path d="M2 2L8 8M8 2L2 8" strokeWidth="1.8" />}
              </svg>
            </div>
          ))}
        </div>
      </div>

      <div className="shrink-0"><TopBar /></div>

      {/* work area */}
      <div className="h-[916px] flex shrink-0">
        <SideBar />
        <div className="flex-1 flex flex-col min-w-0">
          <div className="h-[898px] flex">
            <div className="relative w-[1870px] overflow-hidden bg-white">
              <Plan />
              <Railkeuze />
            </div>
            <div className="w-[20px] bg-[#f0f0f0] flex flex-col items-center pt-[7px] pb-[4px]">
              <svg width="11" height="7" viewBox="0 0 11 7" fill="none"><path d="M1 6L5.5 1.5L10 6" stroke="#666" strokeWidth="1.6" /></svg>
              <div className="w-[16px] h-[27px] bg-[#cdcdcd] mt-[433px]" />
              <svg width="11" height="7" viewBox="0 0 11 7" fill="none" className="mt-auto"><path d="M1 1L5.5 5.5L10 1" stroke="#666" strokeWidth="1.6" /></svg>
            </div>
          </div>
          <div className="h-[18px] bg-[#f0f0f0] flex items-center pl-[5px] pr-[25px]">
            <svg width="7" height="11" viewBox="0 0 7 11" fill="none"><path d="M6 1L1.5 5.5L6 10" stroke="#666" strokeWidth="1.6" /></svg>
            <div className="w-[119px] h-[15px] bg-[#cdcdcd] ml-[870px]" />
            <svg width="7" height="11" viewBox="0 0 7 11" fill="none" className="ml-auto"><path d="M1 1L5.5 5.5L1 10" stroke="#666" strokeWidth="1.6" /></svg>
          </div>
        </div>
      </div>

      <div className="shrink-0"><BottomBar /></div>

      {/* status bar */}
      <div className="h-[19px] bg-[#f0f0f0] flex items-center pl-[2px] shrink-0 text-[12px] overflow-hidden whitespace-nowrap">
        <span>Raadpleeg "WinTrack Help pdf-bestand" voor Help</span>
        <span className="ml-auto mr-[96px]">Platte/Niveau 1/ Grondplaatniveau</span>
        <span className="w-[70px] border-l border-[#cfcfcf] pl-[5px]">&lt;- 764 -&gt;</span>
        <span className="w-[41px] border-l border-[#cfcfcf] pl-[5px]">-00166</span>
        <span className="w-[41px] border-l border-[#cfcfcf] pl-[4px]">-01137</span>
      </div>

      <div className="shrink-0"><Taskbar /></div>
    </div>
  );
}
